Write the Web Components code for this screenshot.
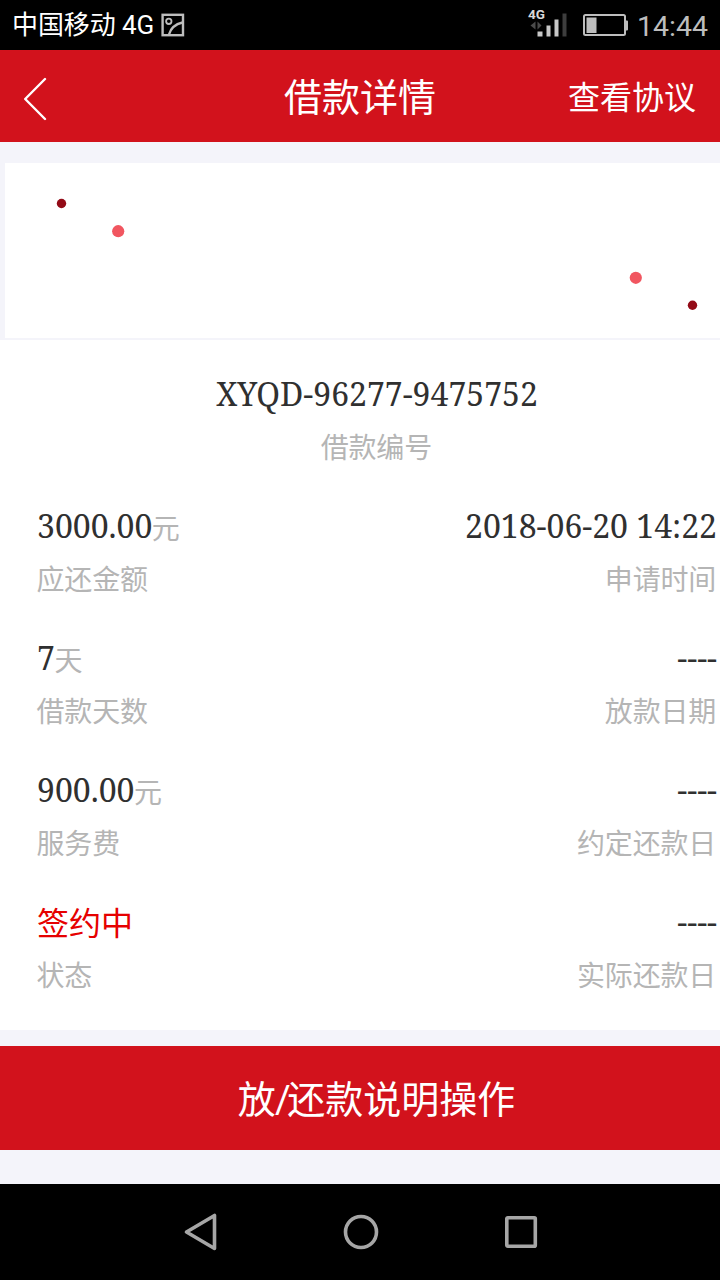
<!DOCTYPE html>
<html lang="zh-CN">
<head>
<meta charset="utf-8">
<title>借款详情</title>
<style>
html,body{margin:0;background:#f4f4fa}
body{font-family:Roboto,"Noto Sans CJK SC",sans-serif}
</style>
</head>
<body>
<loan-page></loan-page>
<script>
function define(name, html) {
  const t = document.createElement('template');
  t.innerHTML = html;
  customElements.define(name, class extends HTMLElement {
    constructor() {
      super();
      this.attachShadow({mode: 'open'}).appendChild(t.content.cloneNode(true));
    }
  });
}

define('status-bar', `
<style>
:host{display:flex;box-sizing:border-box;height:50px;background:#000;color:#fff;align-items:center;padding:0 12px;justify-content:space-between}
.l,.r{display:flex;align-items:center}
.carrier{font-size:26px;line-height:50px;letter-spacing:-.1px;white-space:pre}
.time{font-size:28.500px;line-height:46px;color:#bdbdbd;margin-left:9px;padding-top:4px}
svg{display:block}
</style>
<div class="l"><span class="carrier">中国移动 4G</span>
<svg style="margin-left:7px" width="24" height="24" viewBox="0 0 24 24" fill="none" stroke="#bdbdbd" stroke-width="2.4"><rect x="1.6" y="1.8" width="20.400" height="20.400"/><circle cx="7.800" cy="8.300" r="2.700" stroke-width="1.800"/><path d="M8 21.500C10 14 15 11 21.500 9.500"/></svg></div>
<div class="r">
<svg width="40" height="42" viewBox="0 -4 40 42"><text x="1" y="11" font-size="13.500" font-weight="700" fill="#d8d8d8" font-family="Roboto">4G</text><path d="M3.500 17.500l5-4v8zM14.500 17.500l-4-4v8z" fill="#4a4a4a"/><path d="M10.500 23.500h5v5h-5zM19.500 17.500h4v11h-4zM27.500 11.500h4v17h-4z" fill="#c8c8c8"/><path d="M35.500 5.500h4v23h-4z" fill="#3d3d3d"/></svg>
<svg style="margin-left:16px;margin-right:-1px" width="46" height="24" viewBox="0 0 46 24"><rect x="1" y="2" width="41" height="20" rx="1.500" fill="none" stroke="#bdbdbd" stroke-width="2"/><path d="M3.500 4.500h10v15.500h-10zM43 7.500h1q1 0 1 1v8q0 1-1 1h-1z" fill="#bdbdbd"/></svg>
<span class="time">14:44</span></div>`);

define('title-bar', `
<style>
:host{display:grid;grid-template-columns:1fr auto 1fr;align-items:center;box-sizing:border-box;height:92px;padding:0 24px;background:#d2121c;color:#fff}
svg{display:block}
.t{font-size:38px;line-height:92px;padding-top:2px}
.a{font-size:32px;line-height:90px;padding-top:2px;justify-self:end}
</style>
<svg width="24" height="44" viewBox="0 0 24 44" style="margin:4px 0 0 0" fill="none" stroke="#fff" stroke-width="2.400" stroke-linecap="round" stroke-linejoin="round"><path d="M21 2L1.200 22l19.800 20"/></svg>
<span class="t"><slot></slot></span>
<span class="a"><slot name="action"></slot></span>`);

define('dot-banner', `
<style>
:host{display:block;padding:21px 0 2px 5px;background:#f4f4fa}
svg{display:block;background:#fff}
</style>
<svg width="715" height="175" viewBox="5 163 715 175"><circle cx="61.500" cy="203.500" r="4.700" fill="#930b17"/><circle cx="118.200" cy="231.200" r="6.100" fill="#f15660"/><circle cx="635.800" cy="277.800" r="6.100" fill="#f15660"/><circle cx="692.500" cy="305.300" r="4.700" fill="#930b17"/></svg>`);

define('info-cell', `
<style>
:host{display:flex;flex-direction:column;align-items:flex-start;justify-content:center;height:132px}
:host([align=end]){align-items:flex-end}
:host([align=center]){align-items:center}
.v,.l{height:52px;line-height:52px;white-space:pre}
.v{font:32px/52px "Noto Serif","DejaVu Serif",serif;color:#303030;display:flex}
.l,::slotted([slot=unit]){font:28px/52px "Noto Sans CJK SC",sans-serif;color:#b5b5b5}
.l{letter-spacing:-.150px;margin-right:.800px;margin-left:-.500px}
::slotted([slot=unit]){line-height:54px;margin-left:-.500px}
:host([status]) .v{font:32px/50px "Noto Sans CJK SC",sans-serif;color:#e60000}
</style>
<div class="v"><span><slot></slot></span><slot name="unit"></slot></div>
<div class="l"><slot name="label"></slot></div>`);

define('info-row', `
<style>:host{display:flex;justify-content:space-between}:host([single]){justify-content:center}</style><slot></slot>`);

define('info-panel', `
<style>:host{display:block;box-sizing:border-box;height:690px;background:#fff;padding:14px 3px 16px 37px}</style><slot></slot>`);

define('action-button', `
<style>:host{display:block;margin-top:16px;height:104px;line-height:104px;box-sizing:border-box;padding:2px 0 0 33px;text-align:center;background:#d2121c;color:#fff;font-size:38px}
::slotted(span){letter-spacing:-3.300px;margin-left:-.800px}</style><slot></slot>`);

define('nav-bar', `
<style>
:host{display:flex;height:96px;background:#000;align-items:center;justify-content:center;gap:124px;box-sizing:border-box;padding-left:2px}
svg{display:block}
</style>
<svg width="36" height="40" viewBox="0 0 36 40" fill="none" stroke="#a6a6a6" stroke-width="3.600" stroke-linejoin="round"><path d="M31.500 3.500v33L3.500 20z"/></svg>
<svg width="36" height="36" viewBox="0 0 36 36" fill="none" stroke="#a6a6a6" stroke-width="3.600"><circle cx="18" cy="18" r="15.500"/></svg>
<svg width="36" height="36" viewBox="0 0 36 36" fill="none" stroke="#a6a6a6" stroke-width="3.600"><rect x="3.800" y="3.800" width="28.500" height="28.500" rx="1"/></svg>`);

define('loan-page', `
<style>:host{display:flex;flex-direction:column;width:720px;height:1280px;overflow:hidden;background:#f4f4fa}nav-bar{margin-top:auto}</style>
<status-bar></status-bar>
<title-bar>借款详情<span slot="action">查看协议</span></title-bar>
<dot-banner></dot-banner>
<info-panel>
<info-row single><info-cell align="center">XYQD-96277-9475752<span slot="label">借款编号</span></info-cell></info-row>
<info-row><info-cell>3000.00<span slot="unit">元</span><span slot="label">应还金额</span></info-cell><info-cell align="end">2018-06-20 14:22<span slot="label">申请时间</span></info-cell></info-row>
<info-row><info-cell>7<span slot="unit">天</span><span slot="label">借款天数</span></info-cell><info-cell align="end">----<span slot="label">放款日期</span></info-cell></info-row>
<info-row><info-cell>900.00<span slot="unit">元</span><span slot="label">服务费</span></info-cell><info-cell align="end">----<span slot="label">约定还款日</span></info-cell></info-row>
<info-row><info-cell status>签约中<span slot="label">状态</span></info-cell><info-cell align="end">----<span slot="label">实际还款日</span></info-cell></info-row>
</info-panel>
<action-button>放<span>/</span>还款说明操作</action-button>
<nav-bar></nav-bar>`);
</script>
</body>
</html>
